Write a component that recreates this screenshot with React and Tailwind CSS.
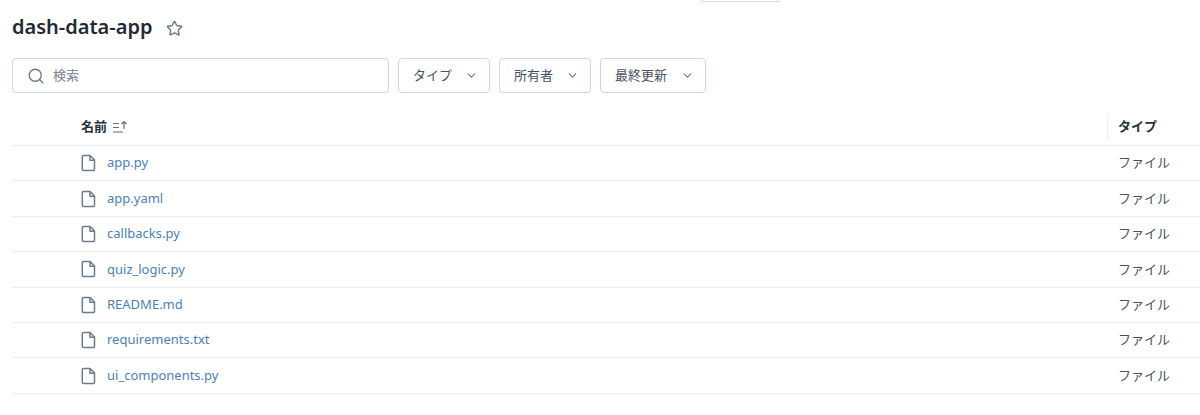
import { Search, Star, ChevronDown } from 'lucide-react';

const files = [
  'app.py',
  'app.yaml',
  'callbacks.py',
  'quiz_logic.py',
  'README.md',
  'requirements.txt',
  'ui_components.py',
];

const filters = [
  { label: 'タイプ', width: 'w-[92px]' },
  { label: '所有者', width: 'w-[92px]' },
  { label: '最終更新', width: 'w-[106px]' },
];

const FileIcon = () => (
  <svg width="16" height="18" viewBox="0 0 16 18" fill="none" stroke="#6b7c8f" strokeWidth="1.5" strokeLinejoin="round">
    <path d="M2.5 1.5h6.6l4.4 4.6v9.2a1.2 1.2 0 0 1-1.2 1.2H2.5a1.2 1.2 0 0 1-1.2-1.2V2.7a1.2 1.2 0 0 1 1.2-1.2z" />
    <path d="M9 1.5v4.8h4.5" />
  </svg>
);

const SortIcon = () => (
  <svg width="17" height="14" viewBox="0 0 17 14" fill="none" stroke="#5f6f80" strokeWidth="1.2">
    <path d="M1 3.5h6M1 7.5h6M1 12h10" />
    <path d="M12 9V1.5M9.5 4l2.5-2.5L14.500 4" />
  </svg>
);

const App = () => {
  return (
    <div className="relative h-[415px] w-[1200px] overflow-hidden bg-white pl-3 font-['Noto_Sans','Noto_Sans_CJK_JP',sans-serif]">
      <div className="absolute left-[701px] top-0 h-[2px] w-[79px] rounded-b border-x border-b border-[#d5dce5] bg-white" />

      <div className="flex h-[58px] items-center pb-[4px]">
        <h1 className="text-[20px] font-semibold leading-none text-[#1f2a36]">dash-data-app</h1>
        <Star className="ml-[14px] mt-[2px]" size={17} color="#66788c" strokeWidth={2} />
      </div>

      <div className="flex gap-[9px]">
        <div className="flex h-[35px] w-[377px] items-center rounded border border-[#cdd7e3] pl-[14px]">
          <Search size={18} color="#66788c" strokeWidth={1.75} />
          <span className="ml-[8px] text-[13px] text-[#77838f]">検索</span>
        </div>
        {filters.map((f) => (
          <div
            key={f.label}
            className={`flex h-[35px] items-center justify-between rounded border border-[#cdd7e3] pl-[14px] pr-[11px] text-[13px] text-[#46525f] ${f.width}`}
          >
            <span>{f.label}</span>
            <ChevronDown size={13} color="#66788c" strokeWidth={2} />
          </div>
        ))}
      </div>

      <div className="mt-[16px]">
        <div className="flex h-[37px] items-center border-b border-[#e4ebf2] text-[13px] font-bold text-[#27313c]">
          <div className="flex flex-1 items-center pl-[69px]">
            <span>名前</span>
            <span className="ml-[5px]"><SortIcon /></span>
          </div>
          <div className="flex h-[24px] w-[93px] items-center border-l border-[#e9eef3] pl-[10px]">タイプ</div>
        </div>
        {files.map((name) => (
          <div key={name} className="flex h-[35.4px] items-center border-b border-[#e9eef3] text-[13px]">
            <div className="flex flex-1 items-center pl-[69px]">
              <FileIcon />
              <span className="ml-[10px] text-[#4a7fb8]">{name}</span>
            </div>
            <div className="w-[93px] pl-[11px] text-[#46525f]">ファイル</div>
          </div>
        ))}
      </div>
    </div>
  );
};

export default App;
